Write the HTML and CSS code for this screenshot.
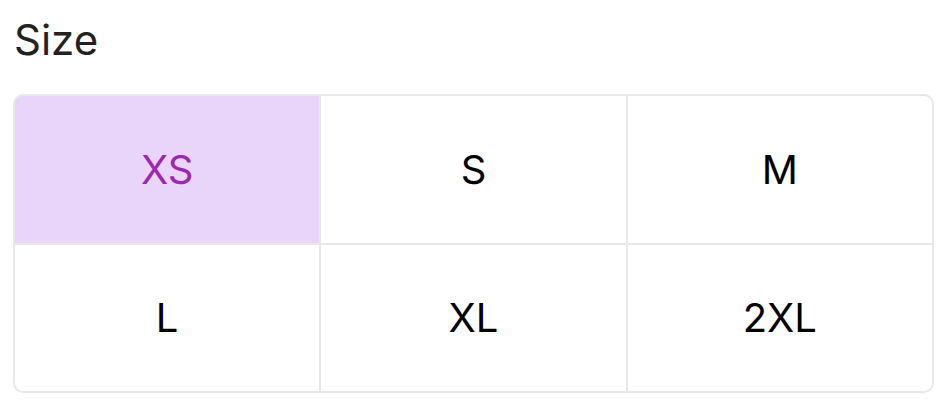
FILE: index.html
```html
<!DOCTYPE html>
<html>
<head>
<meta charset="utf-8">
<link rel="stylesheet" href="styles.css">
</head>
<body>
<div class="picker">
  <div class="label">Size</div>
  <div class="grid">
    <div class="cell selected">XS</div>
    <div class="cell">S</div>
    <div class="cell">M</div>
    <div class="cell">L</div>
    <div class="cell">XL</div>
    <div class="cell">2XL</div>
  </div>
</div>
</body>
</html>
```
FILE: styles.css
```css
html, body {
  margin: 0;
  padding: 0;
  background: #ffffff;
}
body {
  font-family: Inter, "Noto Sans", sans-serif;
}
.picker {
  padding: 14px 13px 0 13px;
}
.label {
  font-size: 42px;
  line-height: 51px;
  color: #222222;
  padding-left: 1px;
  margin-bottom: 29px;
}
.grid {
  width: 921px;
  height: 299px;
  box-sizing: border-box;
  border: 2px solid #e8e8e8;
  border-radius: 10px;
  overflow: hidden;
  display: grid;
  grid-template-columns: repeat(3, 1fr);
  grid-template-rows: repeat(2, 1fr);
  gap: 2px;
  background: #e8e8e8;
}
.cell {
  background: #ffffff;
  display: flex;
  align-items: center;
  justify-content: center;
  font-size: 40px;
  color: #000000;
}
.cell.selected {
  background: #e9d5f9;
  color: #9c27b0;
}
```
